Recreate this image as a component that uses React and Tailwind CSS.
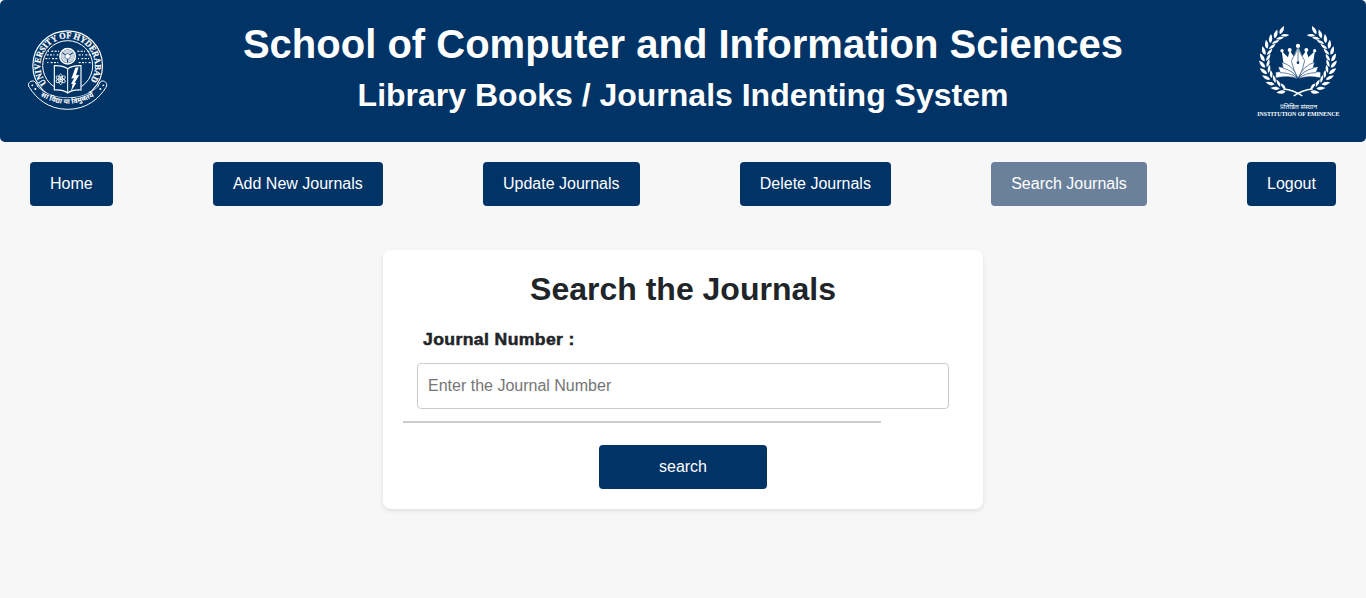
import React from 'react';

const NAV = ['Home', 'Add New Journals', 'Update Journals', 'Delete Journals', 'Search Journals', 'Logout'];

function UniversitySeal() {
  const rays = [];
  [[84, 92], [80, 103], [76, 114], [82, 126], [172, 92], [176, 103], [174, 114], [176, 126]].forEach(([x, y], row) => {
    for (let i = 0; i < 4; i++) {
      rays.push(<rect key={`${row}-${i}`} x={x + i * 10} y={y} width={(i + row) % 3 === 0 ? 3 : 6} height="3.5" />);
    }
  });
  return (
    <svg className="h-[102px] w-[102px] shrink-0" viewBox="-6 0 306 306" fill="none" stroke="#fff">
      <circle cx="143" cy="137" r="104.500" strokeWidth="3.500" />
      <circle cx="143" cy="137" r="75" strokeWidth="3" />
      <defs>
        <path id="seal-arc" d="M80.100 189.800 A82 82 0 1 1 205.900 189.800 L199 197" />
        <path id="motto-text" d="M46 219 Q143 284 238 219" />
      </defs>
      <text fill="#fff" stroke="#fff" strokeWidth="0.700" className="font-['Liberation_Serif',serif] text-[27px] font-bold">
        <textPath href="#seal-arc" textLength="362" lengthAdjust="spacingAndGlyphs">UNIVERSITY OF HYDERABAD</textPath>
      </text>
      <g fill="#fff" stroke="none">{rays}</g>
      <circle cx="143" cy="109" r="28" fill="#003366" stroke="none" />
      <circle cx="143" cy="109" r="23" strokeWidth="5" />
      <circle cx="143" cy="109" r="20" fill="#fff" fillOpacity="0.800" stroke="none" />
      <path d="M127 98 L143 109 L159 98 M143 109 V128" stroke="#003366" strokeWidth="3" />
      <circle cx="143" cy="109" r="8" fill="#fff" stroke="#003366" strokeWidth="1.500" />
      <path d="M103 137 Q128 136 143 146 Q158 136 183 137 V210 Q158 208 143 219 Q128 208 103 210 Z" fill="#003366" strokeWidth="3.500" />
      <path d="M143 146 V218" strokeWidth="3" />
      <g strokeWidth="2.500">
        <ellipse cx="122" cy="178" rx="6" ry="16" />
        <ellipse cx="122" cy="178" rx="6" ry="16" transform="rotate(60 122 178)" />
        <ellipse cx="122" cy="178" rx="6" ry="16" transform="rotate(120 122 178)" />
      </g>
      <circle cx="122" cy="178" r="4" fill="#fff" stroke="none" />
      <path d="M166 143 L176 142 L168 166 L178 165 L164 188 L169 189 L153 214 L158 191 L153 191 L163 174 L154 176 Z" fill="#fff" stroke="none" />
      <path d="M40 183 C29 182 21 191 28 202 C48 234 84 268 143 268 C202 268 238 234 258 202 C264 191 256 182 246 183 C239 184 238 192 233 201 C206 224 180 233 143 233 C106 233 80 224 54 201 C49 192 47 184 40 183 Z" fill="#003366" stroke="none" />
      <path d="M54 201 C49 192 47 184 40 183 C29 182 21 191 28 202 C48 234 84 268 143 268 C202 268 238 234 258 202 C264 191 256 182 246 183 C239 184 238 192 233 201" strokeWidth="3" />
      <path d="M54 201 C80 224 106 233 143 233 C180 233 206 224 233 201" strokeWidth="2" />
      <g fill="#fff" stroke="none">
        <circle cx="37" cy="196" r="2.800" />
        <circle cx="46" cy="207" r="3.200" />
        <circle cx="241" cy="207" r="3.200" />
        <circle cx="250" cy="196" r="2.800" />
      </g>
      <text fill="#fff" stroke="none" textAnchor="middle" className="font-['Noto_Sans_Devanagari','Noto_Sans',sans-serif] text-[21px] font-bold">
        <textPath href="#motto-text" startOffset="50%">सा विद्या या विमुक्तये</textPath>
      </text>
    </svg>
  );
}

function LaurelBranch() {
  const leaves = [];
  for (let i = 0; i < 12; i++) {
    const angle = 113 + i * 11.5;
    const rad = (angle * Math.PI) / 180;
    const x = 148 + 97 * Math.cos(rad);
    const y = 139 + 95 * Math.sin(rad);
    leaves.push(
      <g key={i} transform={`translate(${x.toFixed(1)} ${y.toFixed(1)}) rotate(${(angle + 90).toFixed(1)})`}>
        <path d="M-3 -1 C-2 -11 6 -15 20 -16 C16 -7 8 0 -3 -1 Z" />
        <path d="M-2 3 C3 13 9 16 20 15 C15 8 9 3 -2 3 Z" />
      </g>
    );
  }
  return (
    <g fill="#fff">
      {leaves}
      <path d="M106 222 Q138 225 163 243" fill="none" stroke="#fff" strokeWidth="4.500" />
    </g>
  );
}

function EminenceLogo() {
  return (
    <svg className="h-[112px] w-[102px] shrink-0" viewBox="-6 0 306 336" fill="#fff">
      <LaurelBranch />
      <g transform="translate(300 0) scale(-1 1)"><LaurelBranch /></g>
      <circle cx="150" cy="93" r="6.500" />
      <circle cx="125" cy="105" r="6" />
      <circle cx="175" cy="105" r="6" />
      <circle cx="102" cy="107" r="5" />
      <circle cx="200" cy="107" r="5" />
      <path d="M101 108 L120 127 L125 106 L137 124 L150 94 L163 124 L175 106 L181 127 L201 108 L192 163 Q166 169 150 190 Q135 169 109 163 Z" />
      <g stroke="#003366" strokeWidth="1.800">
        <path d="M83 171 Q128 163 149 191 Q122 180 83 189 Z" />
        <path d="M218 171 Q173 163 152 191 Q179 180 218 189 Z" />
        <path d="M90 155 Q130 156 150 190 Q127 173 97 173 Z" />
        <path d="M211 155 Q171 156 151 190 Q174 173 204 173 Z" />
        <path d="M101 142 Q135 151 150 188 Q132 166 106 160 Z" />
        <path d="M200 142 Q166 151 151 188 Q169 166 195 160 Z" />
        <path d="M150 98 Q141 121 130 137 Q136 166 150 190 Q165 166 170 137 Q159 121 150 98 Z" />
        <path d="M150 105 V139" />
      </g>
      <circle cx="150" cy="143" r="4" fill="#003366" />
      <text x="152" y="281" textAnchor="middle" textLength="112" lengthAdjust="spacingAndGlyphs" className="font-['Noto_Sans_Devanagari','Noto_Sans',sans-serif] text-[20px]">प्रतिष्ठित संस्थान</text>
      <text x="28" y="304" textLength="246" lengthAdjust="spacingAndGlyphs" className="font-['Liberation_Serif',serif] text-[16px] font-bold">INSTITUTION OF EMINENCE</text>
    </svg>
  );
}

export default function App() {
  return (
    <div className="min-h-screen bg-[#f7f7f7] font-['Liberation_Sans',Arial,sans-serif] text-base text-[#212529]">
      <header className="flex h-[142px] items-center justify-between rounded-[5px] bg-[#003366] px-[18px] text-white">
        <UniversitySeal />
        <div className="flex flex-1 flex-col items-center gap-2 pb-2">
          <h1 className="text-[40px] leading-[48px] font-bold">School of Computer and Information Sciences</h1>
          <h2 className="text-[32px] leading-[38px] font-bold">Library Books / Journals Indenting System</h2>
        </div>
        <EminenceLogo />
      </header>

      <nav className="flex justify-between px-[30px] pt-5">
        {NAV.map((label) => (
          <a
            key={label}
            href="#"
            className={
              label === 'Search Journals'
                ? 'h-11 rounded-[4px] bg-[#6b819b] px-5 pt-2.5 leading-6 text-white'
                : 'h-11 rounded-[4px] bg-[#003366] px-5 pt-2.5 leading-6 text-white'
            }
          >
            {label}
          </a>
        ))}
      </nav>

      <main className="mx-auto mt-11 h-[259px] w-[600px] rounded-lg bg-white px-5 pt-5 shadow-[0_2px_4px_rgba(0,0,0,0.1)]">
        <h2 className="text-center text-[32px] leading-[38px] font-bold">Search the Journals</h2>
        <form className="flex flex-col" onSubmit={(e) => e.preventDefault()}>
          <label htmlFor="journal" className="mt-5 ml-5 origin-left scale-x-[1.1] self-start text-[16px] leading-6 font-bold tracking-[0.35px] [-webkit-text-stroke:0.5px_#212529]">
            Journal Number :
          </label>
          <input
            id="journal"
            type="text"
            placeholder="Enter the Journal Number"
            className="mx-[14px] mt-[11px] h-[46px] rounded-[4px] border border-[#cccccc] bg-white px-2.5 pb-px text-base placeholder:text-[#757575]"
          />
          <hr className="mt-3 h-0.5 w-[478px] border-0 bg-[#cccccc]" />
          <button type="submit" className="mx-auto mt-[22px] h-11 w-[168px] rounded-[4px] bg-[#003366] pb-px text-white">
            search
          </button>
        </form>
      </main>
    </div>
  );
}
